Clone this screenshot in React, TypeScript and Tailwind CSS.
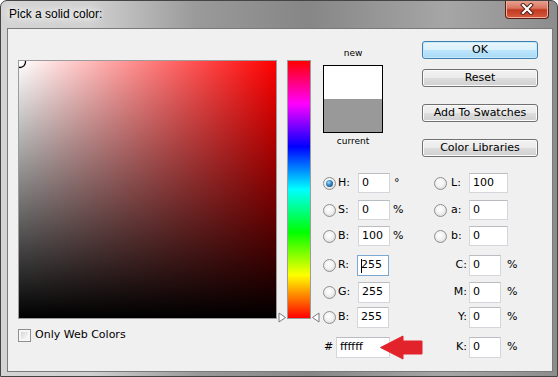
import React from "react";

const F = "font-['DejaVu_Sans',sans-serif]";

function Radio({ checked }: { checked?: boolean }) {
  return (
    <div className="w-[13px] h-[13px] shrink-0 rounded-full border border-[#8e8f8f] bg-[radial-gradient(circle_at_45%_40%,#ffffff_0%,#f2f2f2_45%,#cdcdcd_100%)] flex items-center justify-center">
      {checked && (
        <div className="w-[7px] h-[7px] rounded-full bg-[radial-gradient(circle_at_40%_35%,#a9ddf7_0%,#2f82c4_45%,#0f3f6e_100%)]" />
      )}
    </div>
  );
}

function Field({
  value,
  w,
  focused,
}: {
  value: string;
  w: string;
  focused?: boolean;
}) {
  return (
    <div
      className={`${w} h-full shrink-0 bg-white border flex items-center pl-[3px] text-[11px] text-black ${
        focused ? "border-[#7ba7d1]" : "border-[#d3d6da] border-t-[#b9bcc1]"
      }`}
    >
      {focused && <span className="inline-block w-px h-[14px] bg-black mr-[-1px]" />}
      <span>{value}</span>
    </div>
  );
}

function Btn({ label, primary, cls }: { label: string; primary?: boolean; cls: string }) {
  return (
    <div
      className={`${cls} w-[116px] h-[18px] rounded-[3px] border flex items-center justify-center text-[11px] text-black ${
        primary
          ? "border-[#3c7fb1] bg-[linear-gradient(to_bottom,#eaf6fd_0%,#d9f0fc_50%,#bee6fd_51%,#a7d9f5_100%)] shadow-[inset_0_0_0_1px_#c9e9fb]"
          : "border-[#707070] bg-[linear-gradient(to_bottom,#f2f2f2_0%,#ebebeb_50%,#dddddd_51%,#cfcfcf_100%)] shadow-[inset_0_0_0_1px_#fbfbfb]"
      }`}
    >
      {label}
    </div>
  );
}

export default function App() {
  return (
    <div className="w-[558px] h-[377px] flex flex-col border border-[#444] rounded-t-[7px] overflow-hidden bg-[linear-gradient(to_right,#d4d4d4_0%,#d0d0d0_16%,#9a9a9a_35%,#868686_55%,#a6a6a6_80%,#8c8c8c_100%)]">
      {/* Title bar */}
      <div className="h-[27px] shrink-0 flex items-start justify-between">
        <div className="pl-[8px] pt-[6px] text-[12px] leading-[15px] text-black font-['Liberation_Sans',sans-serif] [text-shadow:0_0_6px_#ffffff,0_0_10px_#ffffff,0_0_14px_#ffffff]">
          Pick a solid color:
        </div>
        <div className="mr-[8px] -mt-px w-[44px] h-[19px] rounded-b-[4px] border border-t-0 border-[#5b1e14] bg-[linear-gradient(to_bottom,#e9a797_0%,#d97560_45%,#c23a20_55%,#d65b3c_100%)] shadow-[inset_0_0_0_1px_#eeb0a2] flex items-center justify-center">
          <svg width="14" height="12" viewBox="0 0 14 12">
            <path d="M3 2 L11 10 M11 2 L3 10" stroke="#4a1a12" strokeWidth="4" strokeLinecap="square" />
            <path d="M3 2 L11 10 M11 2 L3 10" stroke="#ffffff" strokeWidth="2.2" strokeLinecap="square" />
          </svg>
        </div>
      </div>

      {/* Content panel */}
      <div className={`ml-[6px] mr-[4px] mb-[4px] flex-1 border border-[#7a7a7a] bg-[#f0f0f0] flex pl-[10px] pt-[12px] ${F}`}>
        {/* Saturation/brightness field */}
        <div className="mt-[19px] flex flex-col">
          <div className="w-[259px] h-[259px] border border-[#9c9c9c] relative bg-[linear-gradient(to_right,#ffffff,#ff0000)]">
            <div className="absolute inset-0 bg-[linear-gradient(to_bottom,rgba(0,0,0,0),#000000)]" />
            <svg className="absolute left-0 top-0" width="9" height="9">
              <circle cx="1" cy="1" r="5.5" fill="none" stroke="#000" strokeWidth="1.3" />
            </svg>
          </div>
          <div className="mt-[9px] flex items-center h-[14px]">
            <div className="w-[13px] h-[13px] border border-[#8f8f8f] bg-[#f6f6f6] p-[2px]">
              <div className="w-full h-full bg-[linear-gradient(135deg,#d6d6d6,#fbfbfb)]" />
            </div>
            <span className="ml-[4px] text-[11px] text-black">Only Web Colors</span>
          </div>
        </div>

        {/* Hue bar */}
        <div className="ml-[10px] mt-[19px] relative self-start">
          <div className="w-[24px] h-[259px] border border-[#9c9c9c] bg-[#f0f0f0]">
            <div className="w-full h-full bg-[linear-gradient(to_bottom,#ff0000_0%,#ff00ff_16.67%,#0000ff_33.33%,#00ffff_50%,#00ff00_66.67%,#ffff00_83.33%,#ff0000_100%)]" />
          </div>
          <svg className="absolute left-[-9px] top-[252px]" width="9" height="11" viewBox="0 0 9 11">
            <path d="M1 1 L7.5 5.5 L1 10 Z" fill="#fff" stroke="#7a7a7a" strokeWidth="1" />
          </svg>
          <svg className="absolute right-[-9px] top-[252px]" width="9" height="11" viewBox="0 0 9 11">
            <path d="M8 1 L1.5 5.5 L8 10 Z" fill="#fff" stroke="#7a7a7a" strokeWidth="1" />
          </svg>
        </div>

        {/* Right area */}
        <div className="ml-[12px] flex flex-col">
          <div className="flex">
            <div className="w-[60px] flex flex-col items-center">
              <div className="mt-[6px] h-[13px] leading-[13px] text-[9px] text-black">new</div>
              <div className="mt-[5px] w-[60px] h-[68px] border border-black flex flex-col">
                <div className="h-[33px] bg-white" />
                <div className="flex-1 bg-[#999999]" />
              </div>
              <div className="mt-[2px] h-[13px] leading-[13px] text-[9px] text-black">current</div>
            </div>
            <div className="ml-[39px] flex flex-col">
              <Btn label="OK" primary cls="" />
              <Btn label="Reset" cls="mt-[10px]" />
              <Btn label="Add To Swatches" cls="mt-[17px]" />
              <Btn label="Color Libraries" cls="mt-[17px]" />
            </div>
          </div>

          {/* Fields */}
          <div className="flex flex-col text-[11px] text-black">
            {/* H / L */}
            <div className="mt-[16px] h-[20px] flex items-center">
              <div className="w-[111px] h-full flex items-center">
                <Radio checked />
                <span className="w-[22px] pl-[2px]">H:</span>
                <Field value="0" w="w-[32px]" />
                <span className="ml-[4px]">°</span>
              </div>
              <div className="h-full flex items-center">
                <Radio />
                <span className="w-[22px] pl-[4px]">L:</span>
                <Field value="100" w="w-[39px]" />
              </div>
            </div>
            {/* S / a */}
            <div className="mt-[7px] h-[20px] flex items-center">
              <div className="w-[111px] h-full flex items-center">
                <Radio />
                <span className="w-[22px] pl-[2px]">S:</span>
                <Field value="0" w="w-[32px]" />
                <span className="ml-[3px]">%</span>
              </div>
              <div className="h-full flex items-center">
                <Radio />
                <span className="w-[22px] pl-[4px]">a:</span>
                <Field value="0" w="w-[39px]" />
              </div>
            </div>
            {/* B / b */}
            <div className="mt-[6px] h-[20px] flex items-center">
              <div className="w-[111px] h-full flex items-center">
                <Radio />
                <span className="w-[22px] pl-[2px]">B:</span>
                <Field value="100" w="w-[32px]" />
                <span className="ml-[3px]">%</span>
              </div>
              <div className="h-full flex items-center">
                <Radio />
                <span className="w-[22px] pl-[4px]">b:</span>
                <Field value="0" w="w-[39px]" />
              </div>
            </div>
            {/* R / C */}
            <div className="mt-[9px] h-[21px] flex items-center">
              <div className="w-[111px] h-full flex items-center">
                <Radio />
                <span className="w-[21px] pl-[2px]">R:</span>
                <Field value="255" w="w-[32px]" focused />
              </div>
              <div className="h-full flex items-center">
                <span className="w-[35px] pr-[2px] text-right">C:</span>
                <Field value="0" w="w-[32px]" />
                <span className="ml-[6px]">%</span>
              </div>
            </div>
            {/* G / M */}
            <div className="mt-[6px] h-[21px] flex items-center">
              <div className="w-[111px] h-full flex items-center">
                <Radio />
                <span className="w-[22px] pl-[2px]">G:</span>
                <Field value="255" w="w-[32px]" />
              </div>
              <div className="h-full flex items-center">
                <span className="w-[35px] pr-[2px] text-right">M:</span>
                <Field value="0" w="w-[32px]" />
                <span className="ml-[6px]">%</span>
              </div>
            </div>
            {/* B / Y */}
            <div className="mt-[4px] h-[21px] flex items-center">
              <div className="w-[111px] h-full flex items-center">
                <Radio />
                <span className="w-[21px] pl-[2px]">B:</span>
                <Field value="255" w="w-[32px]" />
              </div>
              <div className="h-full flex items-center">
                <span className="w-[35px] pr-[2px] text-right">Y:</span>
                <Field value="0" w="w-[32px]" />
                <span className="ml-[6px]">%</span>
              </div>
            </div>
            {/* # / K */}
            <div className="mt-[9px] h-[21px] flex items-center">
              <div className="w-[111px] h-full flex items-center relative">
                <span className="w-[13px] pl-[1px]">#</span>
                <Field value="ffffff" w="w-[54px]" />
                <svg className="absolute left-[57px] top-[-2px]" width="43" height="25" viewBox="0 0 43 25">
                  <path d="M0.5 12.5 L23 1 L23 6 L42 6 L42 19 L23 19 L23 24 Z" fill="#e3232b" stroke="#e3232b" strokeWidth="1" strokeLinejoin="round" />
                </svg>
              </div>
              <div className="h-full flex items-center">
                <span className="w-[35px] pr-[2px] text-right">K:</span>
                <Field value="0" w="w-[32px]" />
                <span className="ml-[6px]">%</span>
              </div>
            </div>
          </div>
        </div>
      </div>
    </div>
  );
}
